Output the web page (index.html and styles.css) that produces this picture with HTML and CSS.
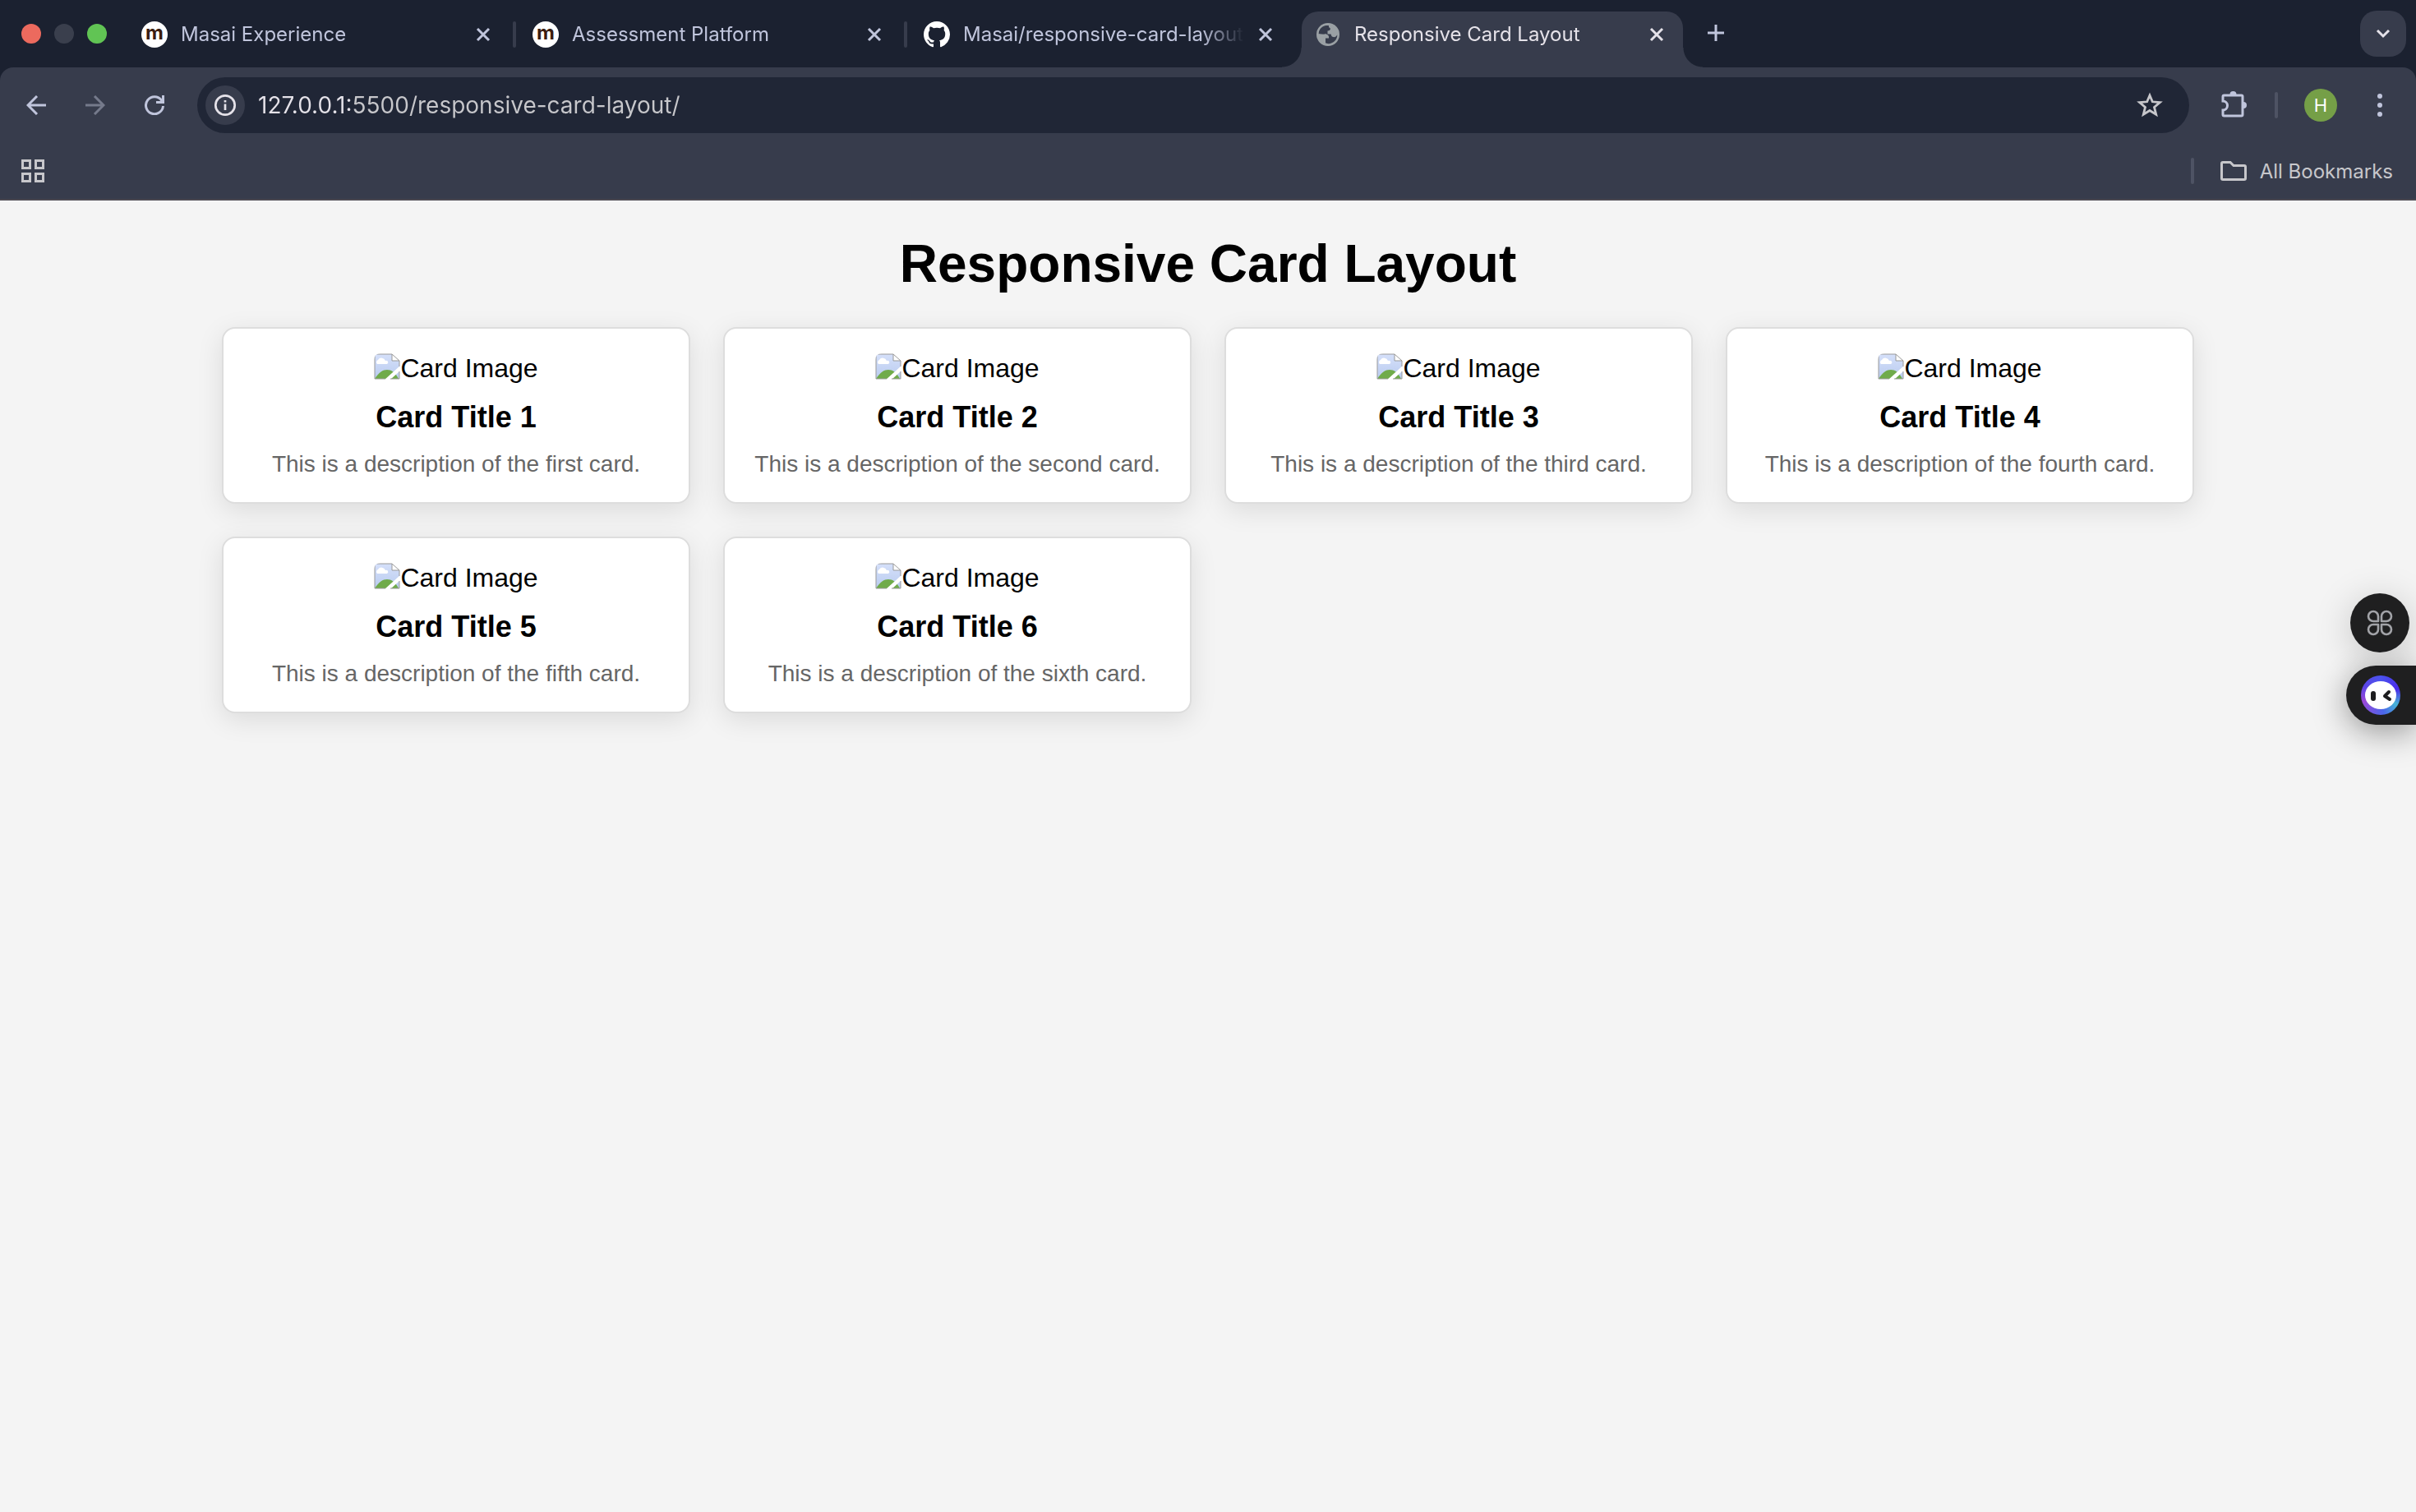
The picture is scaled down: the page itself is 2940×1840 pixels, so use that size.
FILE: index.html
```html
<!DOCTYPE html>
<html lang="en">
<head>
<meta charset="utf-8">
<title>Responsive Card Layout</title>
<link rel="stylesheet" href="styles.css">
</head>
<body>
<svg class="defs" aria-hidden="true">
  <defs>
    <linearGradient id="sky" x1="0" y1="0" x2="0" y2="1"><stop offset="0" stop-color="#d5e0fa"/><stop offset="1" stop-color="#b9cbef"/></linearGradient>
    <clipPath id="corner"><rect width="48" height="48" rx="8"/></clipPath>
    <symbol id="close" viewBox="0 0 20 20"><path d="M3 3L17 17M17 3L3 17" fill="none" stroke="currentColor" stroke-width="3"/></symbol>
    <symbol id="broken" viewBox="0 0 32 32">
      <g clip-path="url(#corner)">
        <path d="M1 1H22L31 10V31H1Z" fill="url(#sky)"/>
        <path d="M4 13a3 3 0 0 1 1-5a5 5 0 0 1 9 1a2 2 0 0 1 2 4Z" fill="#fff"/>
        <path d="M1 31C6 23 11 20 16 20S26 23 30 31Z" fill="#70ab4b"/>
        <path d="M13 32L32 15V21L20 32Z" fill="#fff"/>
        <path d="M22 1V9H31Z" fill="#fff"/>
        <path d="M31 16V9L22 1H1V31H14M20 31H31V22M22 1V9H31" fill="none" stroke="#999" stroke-width="1"/>
      </g>
    </symbol>
  </defs>
</svg>
<header class="browser">
  <div class="strip">
    <div class="lights"><span class="light red"></span><span class="light off"></span><span class="light green"></span></div>
    <nav class="tabs" aria-label="Tabs">
      <div class="tab"><span class="favicon">m</span><a class="name" href="#">Masai Experience</a><button class="icon-button" aria-label="Close tab"><svg width="20" height="20"><use href="#close"/></svg></button></div>
      <div class="tab ruled"><span class="favicon">m</span><a class="name" href="#">Assessment Platform</a><button class="icon-button" aria-label="Close tab"><svg width="20" height="20"><use href="#close"/></svg></button></div>
      <div class="tab ruled"><svg class="site" width="32" height="32" viewBox="0 0 16 16" fill="#fff"><path d="M8 0C3.58 0 0 3.58 0 8c0 3.54 2.29 6.53 5.47 7.59.4.07.55-.17.55-.38 0-.19-.01-.82-.01-1.49-2.01.37-2.53-.49-2.69-.94-.09-.23-.48-.94-.82-1.13-.28-.15-.68-.52-.01-.53.63-.01 1.08.58 1.23.82.72 1.21 1.87.87 2.33.66.07-.52.28-.87.51-1.07-1.78-.2-3.64-.89-3.64-3.95 0-.87.31-1.59.82-2.15-.08-.2-.36-1.02.08-2.12 0 0 .67-.21 2.2.82.64-.18 1.32-.27 2-.27s1.36.09 2 .27c1.53-1.04 2.2-.82 2.2-.82.44 1.1.16 1.92.08 2.12.51.56.82 1.27.82 2.15 0 3.07-1.87 3.75-3.65 3.95.29.25.54.73.54 1.48 0 1.07-.01 1.93-.01 2.2 0 .21.15.46.55.38A8.01 8.01 0 0 0 16 8c0-4.42-3.58-8-8-8z"/></svg><a class="name" href="#">Masai/responsive-card-layout</a><button class="icon-button" aria-label="Close tab"><svg width="20" height="20"><use href="#close"/></svg></button></div>
      <div class="tab active"><svg class="site" width="32" height="32" viewBox="0 0 32 32"><circle cx="16" cy="16" r="14" fill="#9aa0a4"/><path d="M17 5C10 4.500 5 9 4.800 15.500H12C15 15.500 17 17 17 20H12.800V26C14 27.300 18 27.500 20 26.500C24.500 25 27.300 21 27.300 16.500C26 18.500 24.500 19.500 22.300 19C20 18.500 20 16.500 19.500 15.500H15.500V11.500C18 11.500 19 10.500 18.800 8.500L17 7Z" fill="#373c4c"/><path d="M17 5C14 6 14.500 8.500 13.500 9C11 9.500 10.500 10 10.500 12C9.500 13.500 7 13.500 4.800 15.500H12C15.500 15.500 17.500 17.500 17 20.500H13V27.500L8 26L3 18Z" fill="#9aa0a4"/><path d="M17 5C10 4.500 5.500 8.500 4.700 14.500C6 15.300 9 15.500 12 15.500V12.500C12.500 9.500 15 10.500 15.500 7.500Z" fill="#373c4c"/></svg><a class="name" href="#">Responsive Card Layout</a><button class="icon-button" aria-label="Close tab"><svg width="20" height="20"><use href="#close"/></svg></button></div>
    </nav>
    <button class="icon-button new-tab" aria-label="New tab"><svg width="20" height="22" viewBox="0 0 20 22"><path d="M10 0V20M0 10H20" stroke="currentColor" stroke-width="3"/></svg></button>
    <button class="search-tabs" aria-label="Search tabs"><svg width="20" height="12" viewBox="0 0 20 12"><path d="M3 2L10 9L17 2" fill="none" stroke="currentColor" stroke-width="3"/></svg></button>
  </div>
  <div class="toolbar">
    <div class="history">
      <button class="icon-button" aria-label="Back"><svg width="24" height="24" viewBox="0 0 24 24"><path d="M24 12H2M13 1L2 12L13 23" fill="none" stroke="currentColor" stroke-width="3"/></svg></button>
      <button class="icon-button disabled" aria-label="Forward" disabled><svg width="24" height="24" viewBox="0 0 24 24"><path d="M0 12H22M11 1L22 12L11 23" fill="none" stroke="currentColor" stroke-width="3"/></svg></button>
      <button class="icon-button" aria-label="Reload"><svg width="24" height="24" viewBox="0 0 24 24"><path d="M22.500 13A10.500 10.500 0 1 1 20.500 6L22 8M22.500 0V8.500H14" fill="none" stroke="currentColor" stroke-width="3"/></svg></button>
    </div>
    <div class="address">
      <button class="site-info" aria-label="View site information"><svg width="28" height="28" viewBox="0 0 28 28"><circle cx="14" cy="14" r="11.700" fill="none" stroke="currentColor" stroke-width="2.700"/><path d="M14 12.500V20M14 8V10.500" stroke="currentColor" stroke-width="2.700"/></svg></button>
      <input class="url" type="text" aria-label="Address" value="127.0.0.1:5500/responsive-card-layout/">
      <button class="icon-button star" aria-label="Bookmark this tab"><svg width="32" height="32" viewBox="0 0 32 32"><path d="M16 4L19.300 11.800L28.400 12.600L21.500 18.400L23.700 27.200L16 22.500L8.300 27.200L10.500 18.400L3.600 12.600L12.700 11.800Z" fill="none" stroke="currentColor" stroke-width="2.800"/></svg></button>
    </div>
    <button class="icon-button" aria-label="Extensions"><svg width="36" height="36" viewBox="0 0 36 36"><path d="M5 7.500Q5 6 6.500 6H27.500Q29 6 29 7.500V29.500Q29 31 27.500 31H6.500Q5 31 5 29.500V24A5.500 5.500 0 0 0 5 13Z" fill="none" stroke="currentColor" stroke-width="3"/><path d="M13.500 5a4 4 0 0 1 8 0ZM30 14a4 4 0 0 1 0 8Z" fill="currentColor"/></svg></button>
    <span class="rule"></span>
    <button class="avatar" aria-label="Profile">H</button>
    <button class="icon-button" aria-label="Menu"><svg width="8" height="28" viewBox="0 0 8 28"><g fill="currentColor"><circle cx="4" cy="3" r="3"/><circle cx="4" cy="14" r="3"/><circle cx="4" cy="25" r="3"/></g></svg></button>
  </div>
  <div class="bookmarks">
    <button class="icon-button" aria-label="Apps"><svg width="28" height="28" viewBox="0 0 28 28"><path d="M1.500 1.500h9v9h-9zM17.500 1.500h9v9h-9zM1.500 17.500h9v9h-9zM17.500 17.500h9v9h-9z" fill="none" stroke="currentColor" stroke-width="3"/></svg></button>
    <div class="all"><span class="rule"></span><button class="folder"><svg width="32" height="24" viewBox="0 0 32 24"><path d="M1.500 3Q1.500 1.500 3 1.500H12L16 5.500H29Q30.500 5.500 30.500 7V21Q30.500 22.500 29 22.500H3Q1.500 22.500 1.500 21Z" fill="none" stroke="currentColor" stroke-width="3"/></svg>All Bookmarks</button></div>
  </div>
</header>
<main class="page">
  <h1 class="heading">Responsive Card Layout</h1>
  <section class="cards">
    <article class="card"><div class="picture"><svg width="32" height="32"><use href="#broken"/></svg><span>Card Image</span></div><h2 class="title">Card Title 1</h2><p class="text">This is a description of the first card.</p></article>
    <article class="card"><div class="picture"><svg width="32" height="32"><use href="#broken"/></svg><span>Card Image</span></div><h2 class="title">Card Title 2</h2><p class="text">This is a description of the second card.</p></article>
    <article class="card"><div class="picture"><svg width="32" height="32"><use href="#broken"/></svg><span>Card Image</span></div><h2 class="title">Card Title 3</h2><p class="text">This is a description of the third card.</p></article>
    <article class="card"><div class="picture"><svg width="32" height="32"><use href="#broken"/></svg><span>Card Image</span></div><h2 class="title">Card Title 4</h2><p class="text">This is a description of the fourth card.</p></article>
    <article class="card"><div class="picture"><svg width="32" height="32"><use href="#broken"/></svg><span>Card Image</span></div><h2 class="title">Card Title 5</h2><p class="text">This is a description of the fifth card.</p></article>
    <article class="card"><div class="picture"><svg width="32" height="32"><use href="#broken"/></svg><span>Card Image</span></div><h2 class="title">Card Title 6</h2><p class="text">This is a description of the sixth card.</p></article>
  </section>
</main>
<aside class="floating">
  <button class="bubble" aria-label="Tools"><svg width="32" height="32" viewBox="0 0 32 32"><path d="M14 14H8A6 6 0 1 1 14 8ZM18 14V8A6 6 0 1 1 24 14ZM14 18V24A6 6 0 1 1 8 18ZM18 18H24A6 6 0 1 1 18 24Z" fill="none" stroke="#a2a3a8" stroke-width="2.600" stroke-linejoin="round"/></svg></button>
  <button class="bubble pill" aria-label="Assistant"><span class="face"><svg width="38" height="34" viewBox="0 0 38 34"><ellipse cx="19" cy="17" rx="19" ry="17" fill="#fff"/><rect x="7" y="12" width="6" height="12" rx="3" fill="#1d1d1f"/><path d="M29 13L24 18L30 22" fill="none" stroke="#1d1d1f" stroke-width="4" stroke-linejoin="round" stroke-linecap="round"/></svg></span></button>
</aside>
</body>
</html>
```
FILE: styles.css
```css
* { box-sizing: border-box; }

body {
  margin: 0;
  min-height: 100vh;
  background: #f4f4f4;
  font-family: "Liberation Sans", Arial, sans-serif;
  font-size: 32px;
}

.defs { position: absolute; width: 0; height: 0; }

svg { display: block; flex: none; }

button {
  border: 0;
  padding: 0;
  background: none;
  color: inherit;
  font: inherit;
}

/* Browser window */
.browser {
  background: #1b2130;
  color: #c0c5dc;
  font-family: Inter, "Noto Sans", sans-serif;
  font-size: 24px;
}

.icon-button {
  display: flex;
  flex: none;
  align-items: center;
  justify-content: center;
}

.strip {
  display: flex;
  align-items: center;
  height: 82px;
  padding: 0 12px 0 26px;
}

.lights { display: flex; gap: 16px; }
.light { width: 24px; height: 24px; border-radius: 50%; }
.red { background: #ec6a5e; }
.off { background: #3a3f4d; }
.green { background: #61c454; }

.tabs {
  display: flex;
  align-self: stretch;
  flex: 0 1 1892px;
  gap: 12px;
  margin-left: 26px;
}

.tab {
  position: relative;
  display: flex;
  align-items: center;
  flex: 1 1 0;
  min-width: 0;
  height: 68px;
  margin-top: 14px;
  padding: 0 22px 12px 16px;
}

.ruled::before {
  content: "";
  position: absolute;
  left: -8px;
  top: 12px;
  width: 4px;
  height: 32px;
  border-radius: 2px;
  background: #373c4c;
}

.active {
  border-radius: 20px 20px 0 0;
  background: #373c4c;
  color: #e5e2e9;
}

.active::before,
.active::after {
  content: "";
  position: absolute;
  bottom: 0;
  width: 24px;
  height: 24px;
}

.active::before { left: -24px; background: radial-gradient(circle at 0 0, transparent 23px, #373c4c 24px); }
.active::after { right: -24px; background: radial-gradient(circle at 100% 0, transparent 23px, #373c4c 24px); }

.favicon {
  flex: none;
  width: 32px;
  height: 32px;
  border-radius: 50%;
  background: #fff;
  color: #3b1d10;
  font-size: 24px;
  font-weight: 700;
  line-height: 28px;
  text-align: center;
}

.name {
  flex: 1;
  min-width: 0;
  margin: 0 8px 0 16px;
  overflow: hidden;
  color: inherit;
  line-height: 32px;
  text-decoration: none;
  white-space: nowrap;
  -webkit-mask-image: linear-gradient(to right, #000 calc(100% - 60px), transparent calc(100% - 8px));
  mask-image: linear-gradient(to right, #000 calc(100% - 60px), transparent calc(100% - 8px));
}

.new-tab { margin-left: 30px; }

.search-tabs {
  display: flex;
  align-items: center;
  justify-content: center;
  width: 56px;
  height: 56px;
  margin-left: auto;
  border-radius: 20px;
  background: #373c4c;
  color: #e5e2e9;
}

.toolbar {
  display: flex;
  align-items: center;
  padding: 12px 40px 12px 32px;
  border-radius: 16px 16px 0 0;
  background: #373c4c;
}

.toolbar > .icon-button:last-child { margin-left: 48px; }

.history { display: flex; gap: 48px; margin-right: 40px; }
.disabled { color: #757a8b; }

.address {
  display: flex;
  align-items: center;
  flex: 1;
  height: 68px;
  margin-right: 36px;
  padding: 0 32px 0 10px;
  border-radius: 34px;
  background: #202636;
  color: #e5e2e9;
}

.site-info {
  display: flex;
  align-items: center;
  justify-content: center;
  width: 48px;
  height: 48px;
  border-radius: 50%;
  background: #373c4c;
}

.url {
  flex: 1;
  min-width: 0;
  height: 48px;
  margin-left: 16px;
  padding: 0;
  border: 0;
  outline: 0;
  background: linear-gradient(to right, #e5e2e9 112px, #c7c7cb 112px);
  -webkit-background-clip: text;
  background-clip: text;
  color: transparent;
  font: inherit;
  font-size: 28px;
}

.star { color: #c7c7cb; }

.rule {
  width: 4px;
  height: 32px;
  border-radius: 2px;
  background: #4e5364;
}

.toolbar .rule { margin: 0 32px; }

.avatar {
  width: 40px;
  height: 40px;
  border-radius: 50%;
  background: #759f47;
  color: #fff;
  font-size: 22px;
  line-height: 40px;
}

.bookmarks {
  display: flex;
  align-items: center;
  justify-content: space-between;
  height: 70px;
  padding: 0 28px 0 26px;
  border-bottom: 2px solid #4a4850;
  background: #373c4c;
  color: #c7c7cb;
}

.all { display: flex; align-items: center; gap: 32px; }
.folder { display: flex; align-items: center; gap: 16px; }

/* Page */
.page {
  max-width: 2400px;
  margin: 0 auto;
  padding: 40px 0;
}

.heading {
  margin: 0 0 40px;
  font-size: 64px;
  line-height: 74px;
  text-align: center;
}

.cards {
  display: grid;
  grid-template-columns: repeat(auto-fill, minmax(500px, 1fr));
  gap: 40px;
}

.card {
  padding: 30px;
  border: 2px solid #ddd;
  border-radius: 16px;
  background: #fff;
  box-shadow: 0 8px 32px rgba(0, 0, 0, 0.1);
  text-align: center;
}

.picture {
  display: flex;
  align-items: flex-start;
  justify-content: center;
  line-height: 37px;
}

.title {
  margin: 20px 0;
  font-size: 36px;
  line-height: 42px;
}

.text {
  margin: 0;
  color: #666;
  font-size: 28px;
  line-height: 32px;
}

/* Floating assistant */
.floating {
  position: fixed;
  top: 722px;
  right: 0;
  display: flex;
  flex-direction: column;
  align-items: flex-end;
  gap: 16px;
}

.bubble {
  display: flex;
  align-items: center;
  justify-content: center;
  width: 72px;
  height: 72px;
  margin-right: 8px;
  border-radius: 50%;
  background: #1f1f20;
  box-shadow: 0 8px 48px rgba(0, 0, 0, 0.2);
}

.pill {
  justify-content: flex-start;
  width: 85px;
  margin-right: 0;
  padding-left: 18px;
  border-radius: 36px 0 0 36px;
  box-shadow: 0 8px 40px rgba(0, 0, 0, 0.4);
}

.face {
  display: flex;
  align-items: center;
  justify-content: center;
  width: 48px;
  height: 48px;
  border-radius: 50%;
  background: conic-gradient(#4b53ee, #4a2bea 70deg, #46b3d6 120deg, #4a66ea 170deg, #9a48d8 250deg, #5a45e6 300deg, #4b53ee);
}
```
